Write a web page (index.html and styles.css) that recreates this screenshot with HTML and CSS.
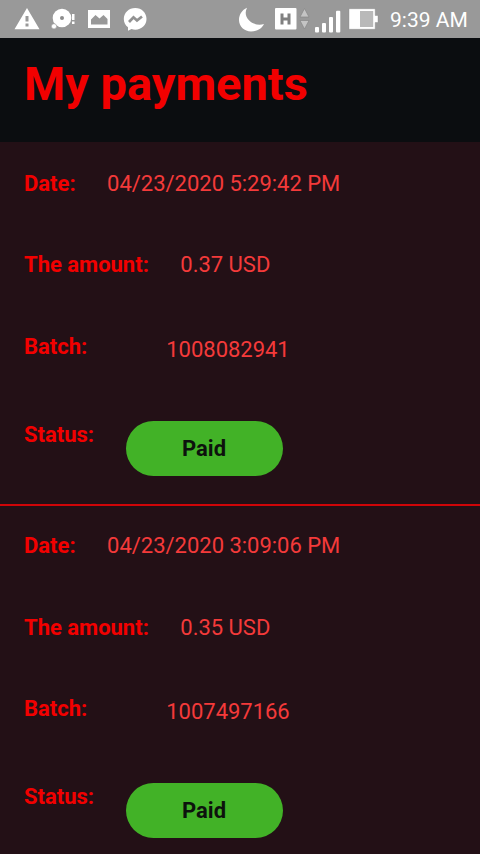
FILE: index.html
```html
<!DOCTYPE html>
<html lang="en">
<head>
<meta charset="utf-8">
<title>My payments</title>
<link rel="stylesheet" href="styles.css">
</head>
<body>
<header class="status-bar">
  <svg class="icons" width="160" height="38" viewBox="0 0 160 38" fill="#fff">
    <path fill-rule="evenodd" d="M27 8L39.500 29.300H14.500ZM25.500 16V21.500H28.500V16ZM25.500 23.500V26.500H28.500V23.500Z"/>
    <circle cx="62" cy="18" r="9.300"/>
    <circle cx="62" cy="18" r="2" fill="#8c8c8c"/>
    <circle cx="54" cy="26.300" r="2.600" stroke="#999" stroke-width=".6"/>
    <path d="M72 14h2.500v6H72zM72 21.500h2.500v2.500H72z"/>
    <path fill-rule="evenodd" d="M88 10H110V28H88ZM91 24.500H107.500V19L103.500 15L99.500 18.500L95.500 15L91 19.500Z"/>
    <path d="M135.300 8C128.800 8 123.800 12.800 123.800 19C123.800 22.500 125.500 25.500 128 27.300V30.800L131.500 29.100C132.700 29.500 134 29.700 135.300 29.700C141.700 29.700 146.500 24.900 146.500 19C146.500 12.800 141.700 8 135.300 8Z"/>
    <path d="M129 22L133.500 17.300L137 20.500L142 16.500" fill="none" stroke="#929292" stroke-width="2.700"/>
  </svg>
  <svg class="icons" width="150" height="38" viewBox="230 0 150 38" fill="#fff">
    <path d="M247 7.700C242 10 239 14.500 239 20C239 26.500 244.500 31.500 251 31.500C257 31.500 262 28.500 264 24C254.500 27.500 241.500 18.500 247 7.700Z"/>
    <rect x="275" y="8" width="21.500" height="21.500" rx="1"/>
    <path d="M282 13.500V24.500M289 13.500V24.500M282 19H289" fill="none" stroke="#808080" stroke-width="3"/>
    <path d="M304.500 8.500L309 17H300ZM300 20.500H309L304.500 29Z" fill="#c4c4c4" stroke="#868686" stroke-width=".7"/>
    <g class="signal"><rect x="315" y="27" width="4" height="5.500" rx="1"/><rect x="322" y="23" width="4" height="9.500" rx="1"/><rect x="329" y="17" width="4" height="15.500" rx="1"/><rect x="336" y="10.700" width="4.300" height="21.800" rx="1"/></g>
    <path d="M349 8.700H375.200V15.500H378V22.500H375.200V29.300H349Z" stroke="#868686" stroke-width=".4"/>
    <path d="M360 11H373.200V27H360Z" fill="#b9b9b9"/>
  </svg>
  <time class="clock">9:39 AM</time>
</header>
<h1 class="title">My payments</h1>
<main>
<section class="payment">
<div class="row"><b>Date:</b><span>04/23/2020 5:29:42 PM</span></div>
<div class="row"><b>The amount:</b><span>0.37 USD</span></div>
<div class="row batch"><b>Batch:</b><span>1008082941</span></div>
<div class="row state"><b>Status:</b><strong class="paid">Paid</strong></div>
</section>
<section class="payment">
<div class="row"><b>Date:</b><span>04/23/2020 3:09:06 PM</span></div>
<div class="row"><b>The amount:</b><span>0.35 USD</span></div>
<div class="row batch"><b>Batch:</b><span>1007497166</span></div>
<div class="row state"><b>Status:</b><strong class="paid">Paid</strong></div>
</section>
</main>
</body>
</html>
```
FILE: styles.css
```css
* { box-sizing: border-box; }
body { margin: 0; height: 854px; overflow: hidden; background: #231016; font-family: Roboto, sans-serif; font-size: 22px; color: #f43a3a; }
.status-bar { height: 38px; display: flex; align-items: center; background: #999; color: #fff; }
.icons { display: block; flex: none; }
.icons + .icons { margin-left: 70px; }
.clock { font-size: 21px; margin-left: 10px; white-space: nowrap; padding-top: 2px; }
.title { margin: 0; height: 104px; padding: 18px 24px 0; background: #0b0d10; color: #f20000; font-size: 47px; line-height: 56px; font-weight: 700; }
.payment { height: 362px; padding: 27.900px 24px 0; }
.payment + .payment { border-top: 2px solid #cf0508; height: 364px; padding-top: 26px; }
.row { display: flex; gap: 31.500px; line-height: 28px; height: 81.500px; }
.row b { color: #f20000; }
.row span { letter-spacing: -.02px; }
.batch { height: 88px; }
.batch span { margin-left: 47.500px; padding-top: 3px; }
.state { height: 56px; }
.paid { width: 157px; height: 55px; border-radius: 28px; background: #42b227; color: #0d120d; text-align: center; line-height: 55px; }
```
